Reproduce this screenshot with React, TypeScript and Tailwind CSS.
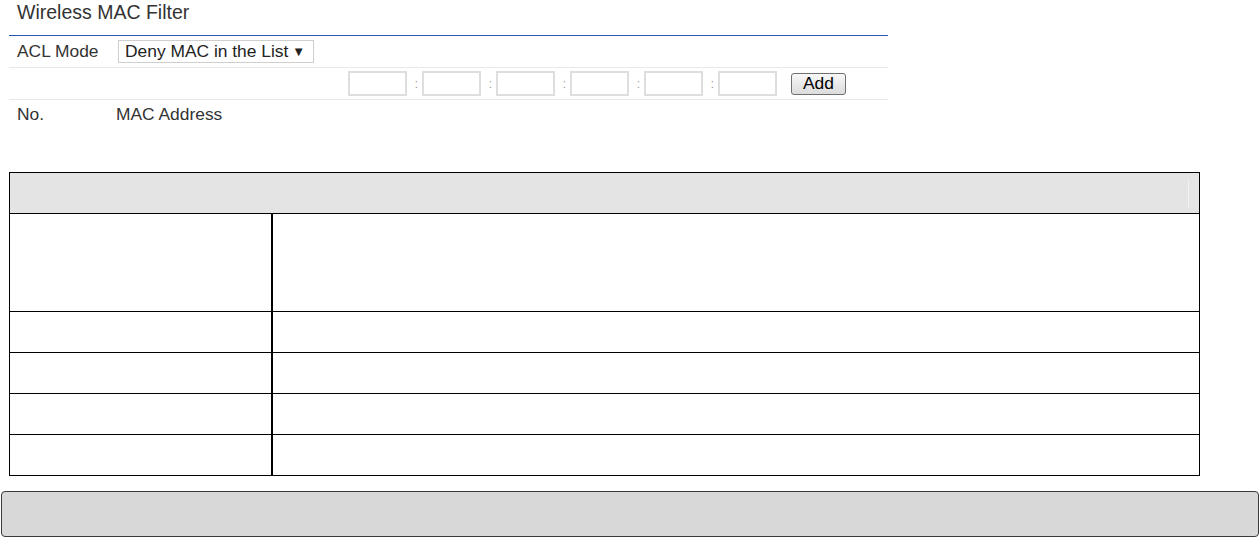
import React from "react";

const Colon = () => (
  <span className="w-[15px] flex justify-center text-[12px] leading-none text-[#999] pl-[4px]">:</span>
);

const MacInput = () => (
  <input
    type="text"
    className="w-[59px] h-[25px] border-2 border-[#dedede] bg-white outline-none"
  />
);

export default function App() {
  const rows = [97, 40, 40, 40, 40];
  return (
    <div
      className="w-[1259px] h-[537px] bg-white text-[#222] overflow-hidden"
      style={{ fontFamily: '"Liberation Sans", Arial, sans-serif' }}
    >
      <div className="ml-[9px] w-[879px]">
        <div className="h-[36px] border-b border-[#2a55b5] pl-[8px] pt-[1px] text-[19.5px] leading-[22px] text-[#333]">
          Wireless MAC Filter
        </div>
        <div className="h-[32px] border-b border-[#e8e8e8] flex items-center pl-[8px] text-[17.4px]">
          <span className="w-[101px] text-[#333]">ACL Mode</span>
          <div className="w-[196px] h-[23px] border border-[#cfcfcf] flex items-center pl-[6px] pr-[8px] justify-between text-[#222]">
            <span>Deny MAC in the List</span>
            <span className="text-[13px]">▼</span>
          </div>
        </div>
        <div className="h-[32px] border-b border-[#e8e8e8] flex items-center pl-[339px]">
          <MacInput />
          <Colon />
          <MacInput />
          <Colon />
          <MacInput />
          <Colon />
          <MacInput />
          <Colon />
          <MacInput />
          <Colon />
          <MacInput />
          <button className="ml-[14px] w-[55px] h-[22px] border border-[#707070] rounded-[3px] bg-gradient-to-b from-[#f8f8f8] to-[#dcdcdc] text-[17.4px] leading-none text-black flex items-center justify-center">
            Add
          </button>
        </div>
        <div className="h-[28px] flex items-center pl-[8px] text-[17.4px] text-[#333]">
          <span className="w-[99px]">No.</span>
          <span>MAC Address</span>
        </div>
      </div>

      <div className="ml-[9px] mt-[44px] w-[1191px] border border-black">
        <div className="h-[41px] bg-[#e4e4e4] border-b border-black flex justify-end items-center pr-[10px]">
          <div className="w-[1px] h-[27px] bg-[#f2f2f2]" />
        </div>
        {rows.map((h, i) => (
          <div
            key={i}
            className={`flex ${i < rows.length - 1 ? "border-b border-black" : ""}`}
            style={{ height: i < rows.length - 1 ? h + 1 : h }}
          >
            <div className="w-[263px] border-r-2 border-black" />
            <div className="flex-1" />
          </div>
        ))}
      </div>

      <div className="ml-[1px] mt-[15px] w-[1258px] h-[46px] border border-[#3a3a3a] rounded-[4px] bg-[#d8d8d8]" />
    </div>
  );
}
